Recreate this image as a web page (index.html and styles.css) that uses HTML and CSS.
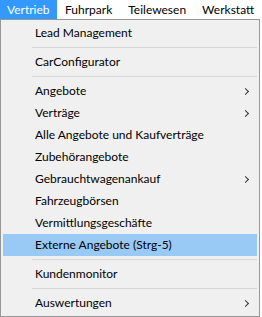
FILE: index.html
```html
<!DOCTYPE html>
<html lang="de">
<head>
  <meta charset="UTF-8">
  <title>Vertrieb</title>
  <link rel="stylesheet" href="styles.css">
</head>
<body>

<div class="menubar">
  <div class="top active">Vertrieb</div>
  <div class="top">Fuhrpark</div>
  <div class="top">Teilewesen</div>
  <div class="top">Werkstatt</div>
</div>

<div class="dropdown">
  <div class="item">Lead Management</div>
  <div class="sep"></div>
  <div class="item">CarConfigurator</div>
  <div class="sep"></div>
  <div class="item sub">Angebote</div>
  <div class="item sub">Verträge</div>
  <div class="item">Alle Angebote und Kaufverträge</div>
  <div class="item">Zubehörangebote</div>
  <div class="item sub">Gebrauchtwagenankauf</div>
  <div class="item">Fahrzeugbörsen</div>
  <div class="item">Vermittlungsgeschäfte</div>
  <div class="item hover">Externe Angebote (Strg-5)</div>
  <div class="sep"></div>
  <div class="item">Kundenmonitor</div>
  <div class="sep"></div>
  <div class="item sub">Auswertungen</div>
</div>

</body>
</html>
```

FILE: styles.css
```css
* {
  box-sizing: border-box;
  margin: 0;
  padding: 0;
}
body {
  font-family: Lato, "Liberation Sans", sans-serif;
  font-size: 12px;
  color: #000;
  background: #ffffff;
  width: 262px;
  height: 317px;
  overflow: hidden;
}
.menubar {
  display: flex;
  height: 19px;
  background: #ffffff;
  white-space: nowrap;
}
.top {
  padding: 0 8px;
  line-height: 19px;
}
.top.active {
  background: #3399ff;
  color: #ffffff;
  width: 57px;
  padding-left: 7px;
}
.dropdown {
  width: 260px;
  height: 298px;
  background: #f0f0f0;
  border: 1px solid #979797;
  padding: 2px 2px;
}
.item {
  position: relative;
  height: 22px;
  line-height: 22px;
  padding-left: 32px;
}
.item.hover {
  background: #99c9f5;
}
.item.sub::after {
  content: "";
  position: absolute;
  right: 9px;
  top: 9px;
  width: 4px;
  height: 4px;
  border-top: 1px solid #333;
  border-right: 1px solid #333;
  transform: rotate(45deg);
}
.sep {
  height: 7px;
  margin-left: 29px;
  padding-top: 3px;
}
.sep::before {
  content: "";
  display: block;
  height: 1px;
  background: #d7d7d7;
}
```
